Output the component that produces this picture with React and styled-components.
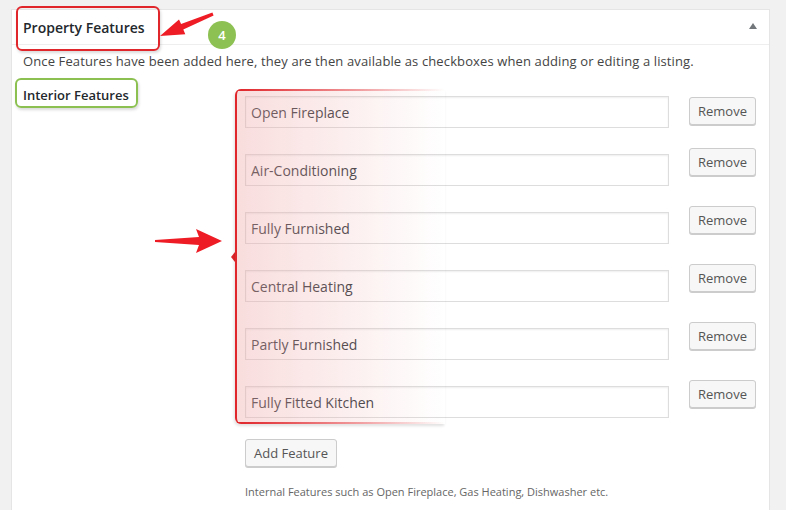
import styled, { createGlobalStyle } from "styled-components";

const GlobalStyle = createGlobalStyle`
  body {
    margin: 0;
    background: #f1f1f1;
    font-family: "Open Sans", "Noto Sans", sans-serif;
    color: #444;
  }
`;

const Page = styled.div`
  position: relative;
  padding: 9px 16px 0 11px;
  height: 510px;
  box-sizing: border-box;
  overflow: hidden;
`;

const Panel = styled.div`
  background: #fff;
  border: 1px solid #e5e5e5;
  height: 520px;
`;

const Header = styled.div`
  height: 34px;
  border-bottom: 1px solid #eee;
  display: flex;
  align-items: center;
  justify-content: space-between;
  padding: 0 12px 0 11px;
`;

const Title = styled.h2`
  position: relative;
  margin: 0;
  font-size: 14px;
  font-weight: 600;
  color: #23282d;
`;

// annotation outline around a piece of text
const Callout = styled.span`
  position: absolute;
  left: ${(p) => p.$l}px;
  top: ${(p) => p.$t}px;
  width: ${(p) => p.$w}px;
  height: ${(p) => p.$h}px;
  border: 2px solid ${(p) => p.$color};
  border-radius: 6px;
  box-shadow: 1px 2px 3px rgba(0, 0, 0, 0.15);
  pointer-events: none;
`;

const Toggle = styled.span`
  width: 0;
  height: 0;
  border-left: 4px solid transparent;
  border-right: 4px solid transparent;
  border-bottom: 6px solid #72777c;
  margin-top: -2px;
`;

const Body = styled.div`
  padding: 6px 12px 0 11px;
`;

const Intro = styled.p`
  margin: 0 0 12px;
  font-size: 13px;
  line-height: 20px;
  letter-spacing: 0.12px;
  color: #444;
`;

const FieldGrid = styled.div`
  display: grid;
  grid-template-columns: 212px 1fr;
`;

const Label = styled.div`
  position: relative;
  align-self: start;
  font-size: 13px;
  font-weight: 600;
  color: #23282d;
  line-height: 20px;
  margin-top: 2px;
  width: fit-content;
`;

const Fields = styled.div`
  position: relative;
  margin-top: 6px;
  padding: 7px 0 0 10px;

  &::before {
    content: "";
    position: absolute;
    left: 0;
    top: 0;
    width: 210px;
    height: 335px;
    box-sizing: border-box;
    border-left: 2px solid #e0262b;
    border-radius: 6px 0 0 6px;
    background:
      linear-gradient(to right, #e0262b, rgba(224, 38, 43, 0)) top left / 100% 2px no-repeat,
      linear-gradient(to right, #e0262b, rgba(224, 38, 43, 0)) bottom left / 100% 2px no-repeat,
      linear-gradient(to right, rgba(240, 170, 170, 0.4), rgba(255, 255, 255, 0));
    box-shadow: -1px 2px 3px rgba(0, 0, 0, 0.12);
    pointer-events: none;
    z-index: 1;
  }

  &::after {
    content: "";
    position: absolute;
    left: -4px;
    top: 163px;
    border-top: 5px solid transparent;
    border-bottom: 5px solid transparent;
    border-right: 4px solid #e0262b;
  }
`;

const Row = styled.div`
  display: flex;
  align-items: flex-start;
  gap: 20px;
  margin-bottom: 26px;
`;

const TextInput = styled.input`
  width: 424px;
  height: 32px;
  box-sizing: border-box;
  border: 1px solid #ddd;
  box-shadow: inset 0 1px 2px rgba(0, 0, 0, 0.07);
  padding: 0 5px;
  font-family: inherit;
  font-size: 14px;
  color: #32373c;
  background: #fff;
  outline: none;
`;

const Button = styled.button`
  height: 28px;
  padding: 0 8px;
  margin-top: ${(p) => p.$offset || 0}px;
  font-family: inherit;
  font-size: 13px;
  color: #555;
  background: #f7f7f7;
  border: 1px solid #ccc;
  border-radius: 3px;
  box-shadow: 0 1px 0 #ccc;
  cursor: pointer;
`;

const AddRow = styled.div`
  margin-top: -5px;
`;

const Help = styled.p`
  margin: 17px 0 0;
  font-size: 11px;
  color: #666;
`;

const Overlay = styled.svg`
  position: absolute;
  left: 0;
  top: 0;
  pointer-events: none;
`;

const Badge = styled.span`
  position: absolute;
  left: 208px;
  top: 21px;
  width: 28px;
  height: 28px;
  border-radius: 50%;
  background: #8dc153;
  color: #fff;
  font-size: 13px;
  font-weight: 600;
  display: flex;
  align-items: center;
  justify-content: center;
`;

const features = [
  "Open Fireplace",
  "Air-Conditioning",
  "Fully Furnished",
  "Central Heating",
  "Partly Furnished",
  "Fully Fitted Kitchen",
];

export default function App() {
  return (
    <>
      <GlobalStyle />
      <Page>
        <Panel>
          <Header>
            <Title>
              Property Features
              <Callout $l={-7} $t={-12} $w={140} $h={41} $color="#e0262b" />
            </Title>
            <Toggle />
          </Header>
          <Body>
            <Intro>
              Once Features have been added here, they are then available as checkboxes when adding or editing a listing.
            </Intro>
            <FieldGrid>
              <Label>
                Interior Features
                <Callout $l={-8} $t={-7} $w={119} $h={26} $color="#8cc152" />
              </Label>
              <Fields>
                {features.map((f, i) => (
                  <Row key={f}>
                    <TextInput defaultValue={f} />
                    <Button $offset={i === 0 ? 1 : -6}>Remove</Button>
                  </Row>
                ))}
                <AddRow>
                  <Button>Add Feature</Button>
                </AddRow>
                <Help>Internal Features such as Open Fireplace, Gas Heating, Dishwasher etc.</Help>
              </Fields>
            </FieldGrid>
          </Body>
        </Panel>
        <Overlay width="786" height="510">
          <path
            d="M160 36 L179 19.4 L181.1 24 L212.4 12.6 L213.6 15.4 L183.3 29.6 L185.3 34.2 Z"
            fill="#ee1c24"
          />
          <path d="M155 240 L199 237 L196 229 L222 241 L196 253 L199 245 L155 242 Z" fill="#ee1c24" />
        </Overlay>
        <Badge>4</Badge>
      </Page>
    </>
  );
}
